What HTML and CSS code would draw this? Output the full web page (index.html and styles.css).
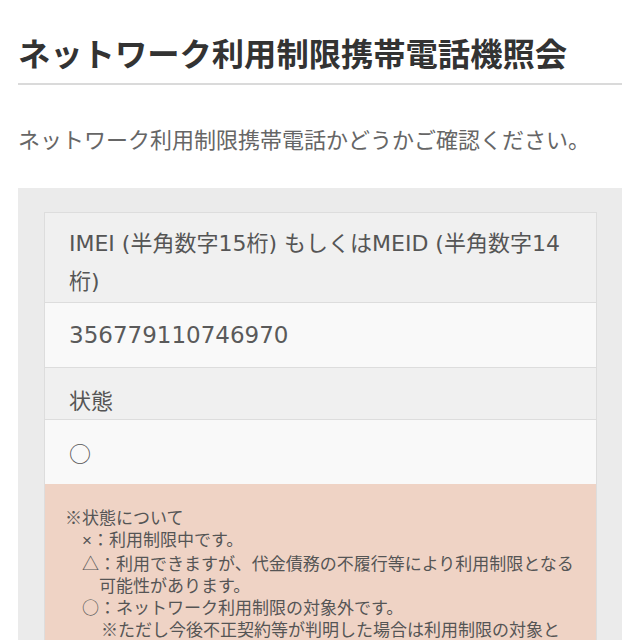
FILE: index.html
```html
<!DOCTYPE html>
<html lang="ja">
<head>
<meta charset="utf-8">
<title>ネットワーク利用制限携帯電話機照会</title>
<link rel="stylesheet" href="styles.css">
</head>
<body>
<main class="page">
  <h1 class="title">ネットワーク利用制限携帯電話機照会</h1>
  <p class="lead">ネットワーク利用制限携帯電話かどうかご確認ください。</p>
  <section class="panel">
    <div class="result">
      <div class="row row-label latin">IMEI (半角数字15桁) もしくはMEID (半角数字14桁)</div>
      <div class="row row-value latin value-num">356779110746970</div>
      <div class="row row-label">状態</div>
      <div class="row row-value">○</div>
      <div class="note">
        <p class="note-title">※状態について</p>
        <ul class="note-list">
          <li><span class="mark-x">×</span>：利用制限中です。</li>
          <li>△：利用できますが、代金債務の不履行等により利用制限となる可能性があります。</li>
          <li>○：ネットワーク利用制限の対象外です。<span class="sub-note">※ただし今後不正契約等が判明した場合は利用制限の対象となる場合があります。</span></li>
        </ul>
      </div>
    </div>
  </section>
</main>
</body>
</html>
```

FILE: styles.css
```css
html, body {
  margin: 0;
  padding: 0;
  background: #ffffff;
}

body {
  font-family: "Noto Sans CJK JP", "Noto Sans", sans-serif;
  color: #555555;
}

.page {
  padding: 0 18px;
}

.title {
  margin: 0;
  padding: 28px 0 7px;
  font-size: 32.3px;
  line-height: 48px;
  font-weight: 700;
  color: #333333;
  border-bottom: 2px solid #dadada;
  white-space: nowrap;
}

.lead {
  margin: 37px 0 0;
  font-size: 22px;
  line-height: 32px;
  color: #666666;
  white-space: nowrap;
}

.panel {
  margin-top: 34px;
  background: #ebebeb;
  padding: 24px 25px 40px 26px;
}

.result {
  border: 1px solid #dddddd;
  border-bottom: none;
}

.row {
  font-size: 22px;
  line-height: 38px;
  padding-left: 24px;
  padding-right: 24px;
  color: #555555;
}

.row + .row {
  border-top: 1px solid #dddddd;
}

.row-label {
  background: #f0f0f0;
  padding-top: 12px;
  padding-bottom: 1px;
}

.row-value {
  background: #f9f9f9;
  padding-top: 13px;
  padding-bottom: 13px;
}

.latin {
  font-family: "DejaVu Sans", "Noto Sans CJK JP", sans-serif;
}

.value-num {
  font-size: 23px;
  color: #5a5a5a;
}

.note {
  background: #efd3c5;
  padding: 22px 20px 60px 20px;
  font-size: 17px;
  line-height: 22px;
  color: #555555;
}

.note-title {
  margin: 0;
}

.note-list {
  list-style: none;
  margin: 0;
  padding: 0 0 0 17px;
}

.note-list li {
  padding-left: 17px;
  text-indent: -17px;
}

.mark-x {
  font-family: "Liberation Sans", sans-serif;
  display: inline-block;
  width: 10px;
  text-indent: 0;
}

.sub-note {
  display: block;
  text-indent: 0;
  margin-left: 2px;
}
```
